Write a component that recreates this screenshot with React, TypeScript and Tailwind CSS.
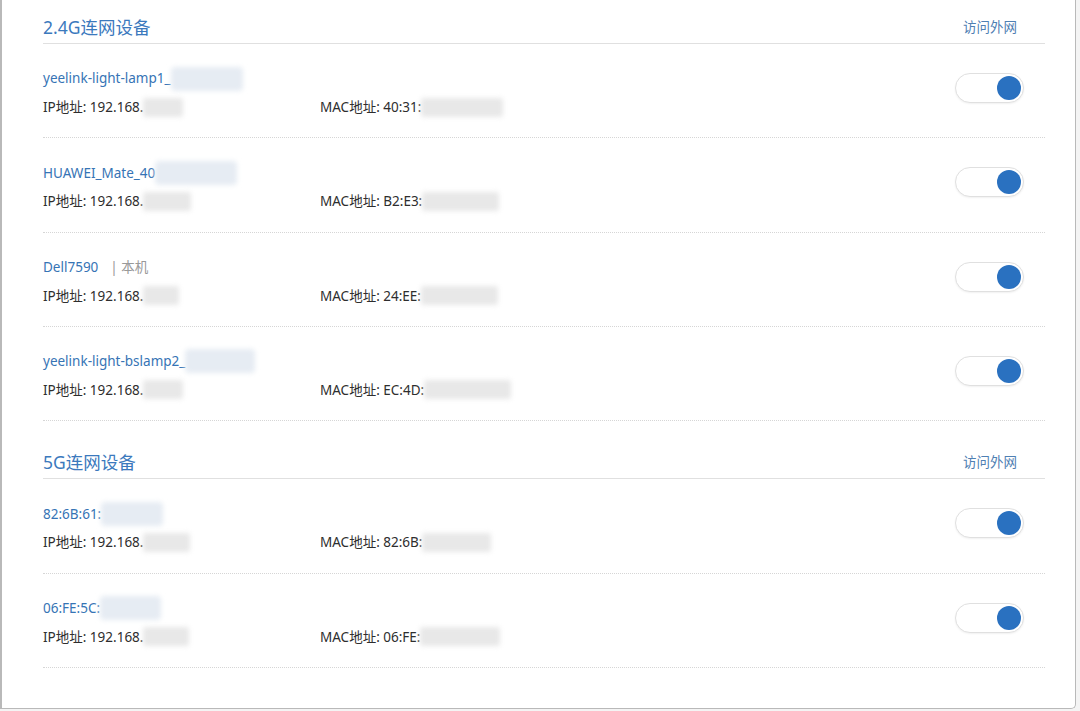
type Device = {
  name: string;
  nameBlur?: number;
  tag?: string;
  ipBlur: number;
  mac: string;
  macBlur: number;
};

const band24: Device[] = [
  { name: "yeelink-light-lamp1_", nameBlur: 72, ipBlur: 40, mac: "40:31:", macBlur: 82 },
  { name: "HUAWEI_Mate_40", nameBlur: 82, ipBlur: 48, mac: "B2:E3:", macBlur: 77 },
  { name: "Dell7590", tag: "| 本机", ipBlur: 36, mac: "24:EE:", macBlur: 77 },
  { name: "yeelink-light-bslamp2_", nameBlur: 70, ipBlur: 40, mac: "EC:4D:", macBlur: 87 },
];

const band5: Device[] = [
  { name: "82:6B:61:", nameBlur: 62, ipBlur: 47, mac: "82:6B:", macBlur: 69 },
  { name: "06:FE:5C:", nameBlur: 61, ipBlur: 46, mac: "06:FE:", macBlur: 80 },
];

function Blur({ w, tint = "gray" }: { w: number; tint?: "gray" | "blue" }) {
  return (
    <span
      className={
        tint === "blue"
          ? "inline-block h-[24px] align-middle rounded-[4px] bg-[#e6ecf3] blur-[2.5px]"
          : "inline-block h-[19px] align-middle rounded-[3px] bg-[#e8e8e8] blur-[2.5px]"
      }
      style={{ width: w }}
    />
  );
}

function Toggle() {
  return (
    <div className="mt-[4.5px] flex h-[30px] w-[69px] items-center justify-end rounded-full border border-[#e0e0e0] bg-white pr-[2px] shadow-[0_1px_2px_rgba(0,0,0,0.06)]">
      <div className="h-[24px] w-[24px] rounded-full bg-[#2a71c0]" />
    </div>
  );
}

function Row({ d }: { d: Device }) {
  return (
    <div className="flex items-start justify-between border-b border-dotted border-[#d6d6d6] pt-[24.5px] pb-[20.33px]">
      <div>
        <div className="flex h-[20px] items-center whitespace-nowrap text-[13.5px] text-[#3674b5]">
          <span>{d.name}</span>
          {d.nameBlur && <Blur w={d.nameBlur} tint="blue" />}
          {d.tag && <span className="ml-[12px] text-[#999]">{d.tag}</span>}
        </div>
        <div className="mt-[8.5px] flex h-[20px] items-center whitespace-nowrap text-[13.5px] text-[#2e2e2e]">
          <div className="flex w-[277px] items-center">
            <span>IP地址: 192.168.</span>
            <Blur w={d.ipBlur} />
          </div>
          <div className="flex items-center">
            <span>MAC地址: {d.mac}</span>
            <Blur w={d.macBlur} />
          </div>
        </div>
      </div>
      <div className="mr-[21px]">
        <Toggle />
      </div>
    </div>
  );
}

function Section({ title, devices, className = "" }: { title: string; devices: Device[]; className?: string }) {
  return (
    <section className={className}>
      <div className="flex items-center justify-between border-b border-[#e0e0e0] pt-[15px] pb-[4px]">
        <h2 className="text-[17.5px] leading-[24px] text-[#3b79bd]">{title}</h2>
        <span className="mr-[28px] text-[13.5px] text-[#4f80b3]">访问外网</span>
      </div>
      {devices.map((d, i) => (
        <Row key={i} d={d} />
      ))}
    </section>
  );
}

export default function App() {
  return (
    <div
      className="relative h-[711px] w-[1080px] overflow-hidden bg-[#f4f4f4]"
      style={{ fontFamily: '"Noto Sans", "Noto Sans CJK SC", sans-serif' }}
    >
      <div className="h-[709px] w-[1076px] rounded-br-[5px] border-b border-l-2 border-r border-[#b9b9b9] bg-white pl-[41px] pr-[30px]">
        <Section title="2.4G连网设备" devices={band24} />
        <Section title="5G连网设备" devices={band5} className="mt-[14px]" />
      </div>
    </div>
  );
}
